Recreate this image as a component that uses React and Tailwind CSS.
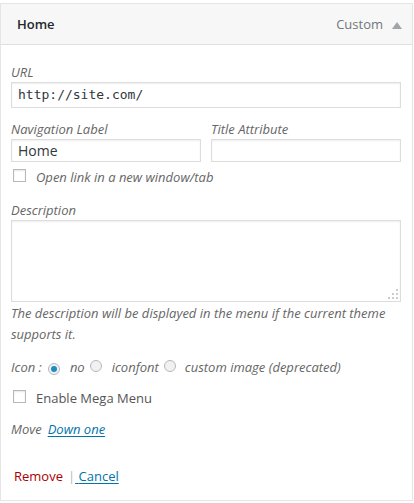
import React from 'react';

const font = { fontFamily: '"Open Sans", "Liberation Sans", sans-serif' };

const Checkbox = () => (
  <span className="inline-block w-[13px] h-[13px] border border-[#b4b9be] bg-white shadow-[inset_0_1px_2px_rgba(0,0,0,0.1)] shrink-0" />
);

const Radio = ({ checked }) => (
  <span className="inline-flex items-center justify-center w-[12px] h-[12px] rounded-full border border-[#b4b9be] bg-[#f1f1f1] shrink-0">
    {checked && <span className="w-[6px] h-[6px] rounded-full bg-[#1e8cbe]" />}
  </span>
);

export default function App() {
  return (
    <div className="bg-white w-[414px] h-[503px] pt-[3px]" style={font}>
      <div className="w-[413px] h-[498px] border border-[#e5e5e5] bg-white">
        {/* Header */}
        <div className="h-[41px] bg-[#f7f7f7] border-b border-[#dfdfdf] flex items-center pl-[16px] pr-[10px] pt-[2px]">
          <span className="text-[13px] font-semibold text-[#23282d] flex-1">Home</span>
          <span className="text-[13px] text-[#72777c] mr-[9px]">Custom</span>
          <svg width="10" height="7" viewBox="0 0 10 7"><path d="M5 0L10 7H0z" fill="#a0a5aa" /></svg>
        </div>

        {/* Body */}
        <div className="pl-[10px] pr-[11px] pt-[17px] text-[13px] text-[#666]">
          <div className="italic leading-[20px]">URL</div>
          <div className="h-[26px] border border-[#ddd] shadow-[inset_0_1px_2px_rgba(0,0,0,0.07)] flex items-center px-[6px] text-[13px] text-[#32373c]" style={{ fontFamily: '"DejaVu Sans Mono", "Liberation Mono", monospace' }}>
            http://site.com/
          </div>

          <div className="flex gap-[10px] mt-[11px]">
            <div className="flex-1">
              <div className="italic leading-[20px]">Navigation Label</div>
              <div className="h-[23px] border border-[#ddd] shadow-[inset_0_1px_2px_rgba(0,0,0,0.07)] flex items-center px-[6px] text-[14px] text-[#32373c]">Home</div>
            </div>
            <div className="flex-1">
              <div className="italic leading-[20px]">Title Attribute</div>
              <div className="h-[23px] border border-[#ddd] shadow-[inset_0_1px_2px_rgba(0,0,0,0.07)]" />
            </div>
          </div>

          <div className="flex items-center mt-[9px] h-[14px]">
            <span className="ml-[2px]"><Checkbox /></span>
            <span className="italic ml-[10px]">Open link in a new window/tab</span>
          </div>

          <div className="italic leading-[20px] mt-[15px]">Description</div>
          <div className="relative h-[82px] border border-[#ddd] shadow-[inset_0_1px_2px_rgba(0,0,0,0.07)]">
            <svg className="absolute right-[1px] bottom-[1px]" width="11" height="11" viewBox="0 0 11 11">
              <rect x="8" y="0" width="2" height="2" fill="#ccc" />
              <rect x="4" y="4" width="2" height="2" fill="#ccc" />
              <rect x="8" y="4" width="2" height="2" fill="#ccc" />
              <rect x="0" y="8" width="2" height="2" fill="#ccc" />
              <rect x="4" y="8" width="2" height="2" fill="#ccc" />
              <rect x="8" y="8" width="2" height="2" fill="#ccc" />
            </svg>
          </div>
          <div className="italic leading-[21px] mt-[1px] pr-[8px]">
            The description will be displayed in the menu if the current theme supports it.
          </div>

          <div className="flex items-center mt-[13px] h-[20px] italic">
            <span>Icon :</span>
            <span className="ml-[6px]"><Radio checked /></span>
            <span className="ml-[10px]">no</span>
            <span className="ml-[5px]"><Radio /></span>
            <span className="ml-[10px]">iconfont</span>
            <span className="ml-[5px]"><Radio /></span>
            <span className="ml-[9px]">custom image (deprecated)</span>
          </div>

          <div className="flex items-center mt-[11px] h-[20px]">
            <span className="ml-[2px]"><Checkbox /></span>
            <span className="ml-[10px] text-[#555]">Enable Mega Menu</span>
          </div>

          <div className="flex items-center mt-[11px] h-[20px] italic">
            <span>Move</span>
            <a href="#" className="ml-[6px] text-[#0073aa] underline underline-offset-2">Down one</a>
          </div>

          <div className="flex items-center mt-[27px] h-[20px] pl-[3px]">
            <a href="#" className="text-[#a00]">Remove</a>
            <span className="ml-[5px] text-[#b4b9be]">|</span>
            <a href="#" className="text-[#0073aa] underline underline-offset-2">{'\u00a0'}Cancel</a>
          </div>
        </div>
      </div>
    </div>
  );
}
